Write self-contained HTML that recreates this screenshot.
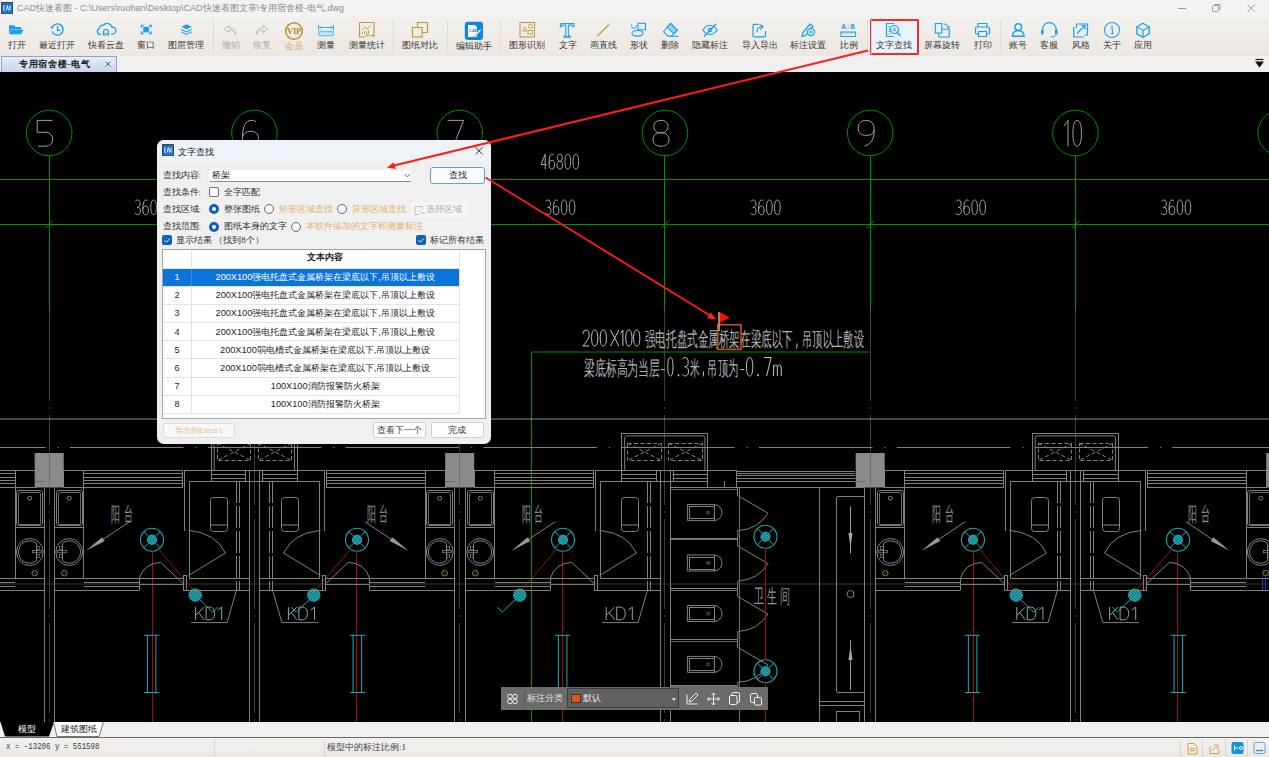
<!DOCTYPE html><html><head><meta charset="utf-8"><style>
*{margin:0;padding:0;box-sizing:border-box}
html,body{width:1269px;height:757px;overflow:hidden;background:#000;font-family:"Liberation Sans",sans-serif}
.a{position:absolute}
.ser{font-family:"Liberation Serif",serif}
.lbl{position:absolute;top:40px;font-family:"Liberation Serif",serif;font-size:9px;color:#3c3835;white-space:nowrap;line-height:11px;text-align:center;width:60px}
.dl{position:absolute;font-family:"Liberation Serif",serif;font-size:9px;color:#333;white-space:nowrap;line-height:11px}
.gold{color:#dfb46c}
.cell{position:absolute;font-size:9.2px;line-height:11px;color:#222;white-space:nowrap;text-align:center}
</style></head><body>
<div class="a" style="left:0;top:0;width:1269px;height:16px;background:#f3f3f3"></div>
<svg class="a" style="left:1px;top:2px" width="12" height="12"><defs><linearGradient id="ig1" x1="0" y1="0" x2="1" y2="1"><stop offset="0" stop-color="#0c62c4"/><stop offset="1" stop-color="#1a86ee"/></linearGradient></defs><rect x="0.5" y="0.5" width="11" height="11.2" fill="url(#ig1)" stroke="#3c3a38" stroke-width="0.9"/><path d="M3.8,3.8h-1v4.5h1M5.2,8.3l1.2,-4.8l1.2,4.8M9,3.6v4.7" fill="none" stroke="#e8f0fa" stroke-width="1"/></svg>
<div class="a" style="left:17px;top:2px;font-size:9px;line-height:12px;color:#8c8c8c;white-space:nowrap">CAD快速看图 - C:\Users\ruohan\Desktop\CAD快速看图文章\专用宿舍楼-电气.dwg</div>
<svg class="a" style="left:0;top:0" width="1269" height="16"><line x1="1178" y1="8.5" x2="1186" y2="8.5" stroke="#9a9a9a" stroke-width="1"/><rect x="1212.5" y="5.5" width="6" height="6" rx="1" fill="none" stroke="#9a9a9a"/><path d="M1214.5,4.5h5.5v5.5" fill="none" stroke="#9a9a9a"/><path d="M1247.5,4.5l7.5,7.5M1255,4.5l-7.5,7.5" stroke="#9a9a9a" stroke-width="1"/></svg>
<div class="a" style="left:0;top:16px;width:1269px;height:40px;background:linear-gradient(#f2f1ee,#ece7e2)"></div>
<div class="a" style="left:870px;top:19px;width:49px;height:36px;background:#e9f1fb;border:2px solid #e8302c;border-radius:1px"></div>
<div class="a" style="left:871px;top:20px;width:1px;height:34px;background:#c5d7ef"></div>
<div class="a" style="left:213px;top:20px;width:1px;height:33px;background:#dedad5"></div>
<div class="a" style="left:393px;top:20px;width:1px;height:33px;background:#dedad5"></div>
<div class="a" style="left:447px;top:20px;width:1px;height:33px;background:#dedad5"></div>
<div class="a" style="left:500px;top:20px;width:1px;height:33px;background:#dedad5"></div>
<div class="a" style="left:867px;top:20px;width:1px;height:33px;background:#dedad5"></div>
<div class="a" style="left:1000px;top:20px;width:1px;height:33px;background:#dedad5"></div>
<div class="lbl" style="left:-13.5px;top:40px;">打开</div>
<div class="lbl" style="left:26.5px;top:40px;">最近打开</div>
<div class="lbl" style="left:75.7px;top:40px;">快看云盘</div>
<div class="lbl" style="left:115.5px;top:40px;">窗口</div>
<div class="lbl" style="left:156px;top:40px;">图层管理</div>
<div class="lbl" style="left:200.5px;top:40px;color:#b4b0ac;">撤销</div>
<div class="lbl" style="left:231.5px;top:40px;color:#b4b0ac;">恢复</div>
<div class="lbl" style="left:264px;top:41px;color:#d6ad66;">会员</div>
<div class="lbl" style="left:296px;top:40px;">测量</div>
<div class="lbl" style="left:336.5px;top:40px;">测量统计</div>
<div class="lbl" style="left:389.5px;top:40px;">图纸对比</div>
<div class="lbl" style="left:443.5px;top:41px;">编辑助手</div>
<div class="lbl" style="left:497px;top:40px;">图形识别</div>
<div class="lbl" style="left:537.5px;top:40px;">文字</div>
<div class="lbl" style="left:573px;top:40px;">画直线</div>
<div class="lbl" style="left:609px;top:40px;">形状</div>
<div class="lbl" style="left:640px;top:40px;">删除</div>
<div class="lbl" style="left:680px;top:40px;">隐藏标注</div>
<div class="lbl" style="left:729.5px;top:40px;">导入导出</div>
<div class="lbl" style="left:778px;top:40px;">标注设置</div>
<div class="lbl" style="left:818.5px;top:40px;">比例</div>
<div class="lbl" style="left:863.5px;top:40px;">文字查找</div>
<div class="lbl" style="left:912px;top:40px;">屏幕旋转</div>
<div class="lbl" style="left:952.5px;top:40px;">打印</div>
<div class="lbl" style="left:988px;top:40px;">账号</div>
<div class="lbl" style="left:1019.3px;top:40px;">客服</div>
<div class="lbl" style="left:1050.5px;top:40px;">风格</div>
<div class="lbl" style="left:1081.5px;top:40px;">关于</div>
<div class="lbl" style="left:1112.8px;top:40px;">应用</div>
<svg class="a" style="left:0;top:0" width="1269" height="56">
<path d="M9,25.3h5.2l1.3,1.6H21v2.3H11.3L9,33.8Z" fill="#1aa0ef"/>
<path d="M11.4,29.6H23.6L21.2,34.2H9.2Z" fill="#1aa0ef"/>
<path d="M52.2,31.5A5.6,5.6 0 1 0 52.3,27.3" fill="none" stroke="#1aa0ef" stroke-width="1.4"/>
<path d="M50,27.6l2.6,-1.6l0.6,2.9z" fill="#1aa0ef"/>
<path d="M57.5,26.3V30.3H60.2" fill="none" stroke="#1aa0ef" stroke-width="1.4"/>
<path d="M101,34.3h-1.2a3,3 0 0 1 -0.5,-5.8a4,4 0 0 1 4.3,-3.3a4.8,4.8 0 0 1 8.3,1.8a3.6,3.6 0 0 1 0.6,7.2h-1.3" fill="none" stroke="#1aa0ef" stroke-width="1.3"/>
<path d="M103.5,35v-3a2.5,2.5 0 0 1 5,0v3z" fill="none" stroke="#1aa0ef" stroke-width="1.2"/>
<line x1="103.5" y1="33.5" x2="108.5" y2="33.5" stroke="#1aa0ef" stroke-width="0.8"/>
<rect x="143.3" y="26.8" width="5.6" height="5.6" fill="#1aa0ef"/>
<path d="M141.5,27.5v-2h2M149,25.5h2v2M151,31.5v2h-2M143.5,33.5h-2v-2" fill="none" stroke="#1aa0ef" stroke-width="1.5"/>
<path d="M186.5,24.3l5.2,2.4l-5.2,2.6l-5.2,-2.6z" fill="#1aa0ef"/>
<path d="M181.3,28.8l5.2,2.6l5.2,-2.6v1.2l-5.2,2.6l-5.2,-2.6z" fill="#1aa0ef"/>
<path d="M181.3,31.3l5.2,2.6l5.2,-2.6v1.2l-5.2,2.6l-5.2,-2.6z" fill="#1aa0ef"/>
<path d="M229,25.2l-4.6,3.6l4.6,3.6v-2.2c3.2,0 5.6,1.2 6.6,4.3c0.3,-4 -2.3,-6.6 -6.6,-6.8z" fill="none" stroke="#bdb9b5" stroke-width="1"/>
<path d="M263,25.2l4.6,3.6l-4.6,3.6v-2.2c-3.2,0 -5.6,1.2 -6.6,4.3c-0.3,-4 2.3,-6.6 6.6,-6.8z" fill="none" stroke="#bdb9b5" stroke-width="1"/>
<circle cx="294" cy="31" r="8.3" fill="none" stroke="#c08a2a" stroke-width="1.4"/>
<text x="294" y="34.3" font-family="Liberation Serif" font-weight="bold" font-size="8.6" fill="#b98a22" text-anchor="middle" letter-spacing="-0.3">VIP</text>
<path d="M318.5,25v5M333.5,25v5" stroke="#3aa8ee" stroke-width="1"/>
<line x1="319" y1="27.5" x2="333" y2="27.5" stroke="#3aa8ee" stroke-width="1"/>
<path d="M319,27.5l2.2,-1.6v3.2zM333,27.5l-2.2,-1.6v3.2z" fill="#3aa8ee"/>
<rect x="319" y="31.3" width="14" height="4.4" fill="#cfe9f8" stroke="#5ab8ee" stroke-width="1"/>
<path d="M321,31.8v2M323.5,31.8v1.5M326,31.8v2M328.5,31.8v1.5M331,31.8v2" stroke="#5ab8ee" stroke-width="0.6"/>
<path d="M359.5,22.5h14.5v14.5" fill="none" stroke="#c49a3e" stroke-width="1.1"/>
<path d="M359.5,22.5v14.5h6" fill="none" stroke="#c49a3e" stroke-width="1.1"/>
<path d="M362,30l3,-3l2,2l3.5,-3.5" fill="none" stroke="#c49a3e" stroke-width="0.9"/>
<path d="M362.5,34v-2M364.5,34v-3M366.5,34v-2.5M368.5,34v-4" stroke="#c49a3e" stroke-width="0.9"/>
<path d="M366.5,35.5h7M367,34v3M373,34v3" stroke="#c49a3e" stroke-width="0.8"/>
<rect x="412.5" y="27.5" width="9.5" height="9.5" fill="none" stroke="#c49a3e" stroke-width="1.2"/>
<path d="M417.5,27.5v-5h10v10h-5.5" fill="none" stroke="#c49a3e" stroke-width="1.2"/>
<rect x="464.8" y="21.8" width="18.2" height="18.2" rx="3" fill="#0e86de"/>
<path d="M468,25h7l2,2v10h-9z" fill="#fff"/>
<text x="469" y="31.5" font-family="Liberation Sans" font-weight="bold" font-size="4" fill="#0e86de">CAD</text>
<path d="M474,36l6,-7l1.3,1.1l-6,7l-1.8,0.6z" fill="#fff" stroke="#0e86de" stroke-width="0.5"/>
<rect x="520" y="22.5" width="14.5" height="14.5" fill="none" stroke="#c49a3e" stroke-width="1.1"/>
<path d="M522.5,31l2.2,-4l2.2,4z" fill="none" stroke="#c49a3e" stroke-width="0.9"/>
<circle cx="530.3" cy="26.3" r="2" fill="none" stroke="#c49a3e" stroke-width="0.9"/>
<rect x="528" y="30.5" width="4.5" height="3.5" fill="none" stroke="#c49a3e" stroke-width="0.9"/>
<path d="M561,23.5h13v3.2h-1.4l-0.6,-1.6h-3.6v11h1.8v1h-6.2v-1h1.8v-11h-3.6l-0.6,1.6h-1.4z" fill="none" stroke="#1aa0ef" stroke-width="1.1"/>
<line x1="597.5" y1="36" x2="609" y2="24.3" stroke="#c9a44f" stroke-width="1.5"/>
<rect x="638" y="23.3" width="7.5" height="6.5" fill="none" stroke="#1aa0ef" stroke-width="1.1"/>
<ellipse cx="637.5" cy="33.3" rx="5.5" ry="2.8" fill="none" stroke="#1aa0ef" stroke-width="1.1"/>
<path d="M631.5,24.5c0,3 1,4 2.5,4s1.5,-3 3,-3" fill="none" stroke="#1aa0ef" stroke-width="1"/>
<path d="M670.5,23.5l6.8,6.8l-5.8,5.8h-3.5l-4.5,-4.5z" fill="none" stroke="#1aa0ef" stroke-width="1.1"/>
<path d="M670.5,23.5l6.8,6.8l-3.5,3.5l-6.8,-6.8z" fill="#9ad2f6" stroke="#1aa0ef" stroke-width="1.1"/>
<line x1="671" y1="36.3" x2="678.5" y2="36.3" stroke="#1aa0ef" stroke-width="1"/>
<path d="M702.8,30c2,-3 4.3,-4.5 7.2,-4.5s5.2,1.5 7.2,4.5c-2,3 -4.3,4.5 -7.2,4.5s-5.2,-1.5 -7.2,-4.5z" fill="none" stroke="#1aa0ef" stroke-width="1.2"/>
<circle cx="710" cy="30" r="1.8" fill="none" stroke="#1aa0ef" stroke-width="1.1"/>
<line x1="704" y1="36.5" x2="716" y2="24" stroke="#1aa0ef" stroke-width="1.2"/>
<path d="M758.5,24.3h-4.5a1,1 0 0 0 -1,1v10.5a1,1 0 0 0 1,1h10.5a1,1 0 0 0 1,-1v-4.5" fill="none" stroke="#1aa0ef" stroke-width="1.2"/>
<path d="M757,32c0,-3.5 2,-5.5 5.5,-5.5M759.5,24.5l3.5,2l-2.5,3" fill="none" stroke="#1aa0ef" stroke-width="1.2"/>
<path d="M802,36.5l1,-4l7,-8.5l3,2.5l-7,8.5z" fill="none" stroke="#1aa0ef" stroke-width="1.3"/>
<circle cx="811" cy="32" r="3.6" fill="#f0ede9" stroke="#1aa0ef" stroke-width="1.2"/>
<circle cx="811" cy="32" r="1.3" fill="none" stroke="#1aa0ef" stroke-width="0.9"/>
<text x="848" y="29" font-family="Liberation Mono" font-weight="bold" font-size="7.5" fill="#1aa0ef" text-anchor="middle">A:B</text>
<rect x="840.8" y="32" width="14.8" height="4.5" fill="none" stroke="#1aa0ef" stroke-width="1"/>
<path d="M843,32v2M845,32v1.5M847,32v2M849,32v1.5M851,32v2M853,32v1.5" stroke="#1aa0ef" stroke-width="0.6"/>
<path d="M894,23.5h-7.5v13h7" fill="none" stroke="#1aa0ef" stroke-width="1.2"/>
<path d="M888.5,26.5h2M888.5,29h1.5M888.5,31.5h1.5M888.5,34h2" stroke="#1aa0ef" stroke-width="0.8"/>
<circle cx="894.5" cy="29.5" r="4" fill="none" stroke="#1aa0ef" stroke-width="1.2"/>
<path d="M893,31.5l1.5,-4l1.5,4M893.5,30.3h2" fill="none" stroke="#1aa0ef" stroke-width="0.7"/>
<line x1="897.3" y1="32.5" x2="900.3" y2="35.8" stroke="#1aa0ef" stroke-width="1.4"/>
<rect x="935.3" y="23.5" width="6.5" height="9.5" fill="none" stroke="#1aa0ef" stroke-width="1.1"/>
<path d="M941.8,29.3h7.5v7.7h-10.5v-4" fill="none" stroke="#1aa0ef" stroke-width="1.1"/>
<path d="M944,24c2.5,0 4.5,1.5 4.5,4M947,26.5l1.5,1.8l1.5,-1.8" fill="none" stroke="#1aa0ef" stroke-width="1"/>
<path d="M978,27v-3.5h9v3.5" fill="none" stroke="#1aa0ef" stroke-width="1.2"/>
<rect x="975.5" y="27" width="14" height="7" rx="1.5" fill="none" stroke="#1aa0ef" stroke-width="1.2"/>
<rect x="978.5" y="31.5" width="8" height="5" fill="#f0ede9" stroke="#1aa0ef" stroke-width="1.1"/>
<circle cx="1018.3" cy="27" r="3.3" fill="none" stroke="#1aa0ef" stroke-width="1.4"/>
<path d="M1012.5,36.3c0,-3.5 2.5,-5.5 5.8,-5.5s5.8,2 5.8,5.5z" fill="none" stroke="#1aa0ef" stroke-width="1.4"/>
<path d="M1042.5,32v-2.5a6.8,6.8 0 0 1 13.6,0v2.5" fill="none" stroke="#1aa0ef" stroke-width="1.2"/>
<rect x="1041" y="29.5" width="2.6" height="5" rx="1.2" fill="#1aa0ef"/>
<rect x="1055" y="29.5" width="2.6" height="5" rx="1.2" fill="#1aa0ef"/>
<path d="M1056,34.5c0,1.5 -1.5,2.3 -4,2.3h-1.5" fill="none" stroke="#1aa0ef" stroke-width="1"/>
<path d="M1076.5,24h11v11h-3M1076.5,24v4" fill="none" stroke="#1aa0ef" stroke-width="1.2"/>
<path d="M1073.8,27v10h10" fill="none" stroke="#1aa0ef" stroke-width="1.2"/>
<path d="M1077,33.5l8,-8M1081,25.5h4v4" fill="none" stroke="#1aa0ef" stroke-width="1.2"/>
<circle cx="1112" cy="30" r="7.5" fill="none" stroke="#1aa0ef" stroke-width="1.1"/>
<circle cx="1112" cy="26.3" r="0.9" fill="#1aa0ef"/>
<path d="M1110.8,28.5h1.6v5M1110.5,33.7h3.2" fill="none" stroke="#1aa0ef" stroke-width="1"/>
<path d="M1143,23.3l6.2,3.5v7l-6.2,3.5l-6.2,-3.5v-7z" fill="none" stroke="#1aa0ef" stroke-width="1.3"/>
<path d="M1136.8,26.8l6.2,3.6l6.2,-3.6M1143,30.4v6.8" fill="none" stroke="#1aa0ef" stroke-width="1.2"/>
</svg>
<div class="a" style="left:0;top:56px;width:1269px;height:16px;background:#f0f0f0"></div>
<div class="a" style="left:1px;top:56px;width:116px;height:16px;background:linear-gradient(#e6eef8,#c5d6ea);border:1px solid #8aa8cf;border-bottom:none"></div>
<div class="a ser" style="left:19px;top:58.5px;font-size:9px;line-height:11px;color:#1a1a1a;font-weight:bold;white-space:nowrap;letter-spacing:0.7px">专用宿舍楼-电气</div>
<svg class="a" style="left:0;top:56px" width="1269" height="16"><path d="M105.5,5.5l5,5M110.5,5.5l-5,5" stroke="#555" stroke-width="0.9"/><path d="M1255.5,3.5h8" stroke="#222" stroke-width="1.2"/><path d="M1255,5.5h9l-4.5,6z" fill="#111"/></svg>
<div class="a" style="left:0;top:72px;width:1269px;height:650px;background:#000"></div>
<svg class="a" style="left:0;top:0" width="1269" height="757" viewBox="0 0 1269 757"><defs><pattern id="hat" width="2.2" height="2.2" patternUnits="userSpaceOnUse" patternTransform="rotate(45)"><rect width="2.2" height="2.2" fill="#22b0b8"/><rect width="0.8" height="2.2" fill="#0c5a60"/></pattern><clipPath id="cp"><rect x="0" y="72" width="1269" height="650"/></clipPath></defs><g clip-path="url(#cp)"><line x1="49.5" y1="311" x2="49.5" y2="722" stroke="#3c3c3c" stroke-width="1" stroke-dasharray="90,6,2,6"/><line x1="254.5" y1="311" x2="254.5" y2="722" stroke="#3c3c3c" stroke-width="1" stroke-dasharray="90,6,2,6"/><line x1="459.5" y1="311" x2="459.5" y2="722" stroke="#3c3c3c" stroke-width="1" stroke-dasharray="90,6,2,6"/><line x1="664.5" y1="311" x2="664.5" y2="722" stroke="#3c3c3c" stroke-width="1" stroke-dasharray="90,6,2,6"/><line x1="870.5" y1="311" x2="870.5" y2="722" stroke="#3c3c3c" stroke-width="1" stroke-dasharray="90,6,2,6"/><line x1="1075.5" y1="311" x2="1075.5" y2="722" stroke="#3c3c3c" stroke-width="1" stroke-dasharray="90,6,2,6"/><line x1="1280.5" y1="311" x2="1280.5" y2="722" stroke="#3c3c3c" stroke-width="1" stroke-dasharray="90,6,2,6"/><line x1="0" y1="584" x2="1269" y2="584" stroke="#353535" stroke-width="1"/><circle cx="49.2" cy="133" r="22.8" fill="none" stroke="#009000" stroke-width="1"/><line x1="49.5" y1="155.8" x2="49.5" y2="311" stroke="#009000" stroke-width="1"/><path d="M45.2,228.5L53.2,220.5" stroke="#009000" stroke-width="1"/><circle cx="254.45" cy="133" r="22.8" fill="none" stroke="#009000" stroke-width="1"/><line x1="254.5" y1="155.8" x2="254.5" y2="311" stroke="#009000" stroke-width="1"/><path d="M250.45,228.5L258.45,220.5" stroke="#009000" stroke-width="1"/><circle cx="459.7" cy="133" r="22.8" fill="none" stroke="#009000" stroke-width="1"/><line x1="459.5" y1="155.8" x2="459.5" y2="311" stroke="#009000" stroke-width="1"/><path d="M455.7,228.5L463.7,220.5" stroke="#009000" stroke-width="1"/><circle cx="664.95" cy="133" r="22.8" fill="none" stroke="#009000" stroke-width="1"/><line x1="664.5" y1="155.8" x2="664.5" y2="311" stroke="#009000" stroke-width="1"/><path d="M660.95,228.5L668.95,220.5" stroke="#009000" stroke-width="1"/><circle cx="870.2" cy="133" r="22.8" fill="none" stroke="#009000" stroke-width="1"/><line x1="870.5" y1="155.8" x2="870.5" y2="311" stroke="#009000" stroke-width="1"/><path d="M866.2,228.5L874.2,220.5" stroke="#009000" stroke-width="1"/><circle cx="1075.45" cy="133" r="22.8" fill="none" stroke="#009000" stroke-width="1"/><line x1="1075.5" y1="155.8" x2="1075.5" y2="311" stroke="#009000" stroke-width="1"/><path d="M1071.45,228.5L1079.45,220.5" stroke="#009000" stroke-width="1"/><circle cx="1280.7" cy="133" r="22.8" fill="none" stroke="#009000" stroke-width="1"/><line x1="1280.5" y1="155.8" x2="1280.5" y2="311" stroke="#009000" stroke-width="1"/><path d="M1276.7,228.5L1284.7,220.5" stroke="#009000" stroke-width="1"/><line x1="0" y1="179.5" x2="1269" y2="179.5" stroke="#009000" stroke-width="1"/><line x1="0" y1="224.5" x2="1269" y2="224.5" stroke="#009000" stroke-width="1"/><path transform="translate(37.20,120.40) scale(1.600,2.580)" d="M9.5,0H0V4.6H5.5A4.2,2.7 0 0 1 5.5,10H0.5" fill="none" stroke="#a0a0a0" stroke-width="1.0" vector-effect="non-scaling-stroke"/><path transform="translate(242.45,120.40) scale(1.600,2.580)" d="M8.5,0.5C7.5,0.1 6.5,0 5.5,0C1.5,0 0,3 0,6.5C0,9 2,10 5,10C8,10 10,9 10,7C10,5 8,4.2 5,4.2C2.5,4.2 0.8,5 0,6.5" fill="none" stroke="#a0a0a0" stroke-width="1.0" vector-effect="non-scaling-stroke"/><path transform="translate(447.70,120.40) scale(1.600,2.580)" d="M0,0H10L3.5,10" fill="none" stroke="#a0a0a0" stroke-width="1.0" vector-effect="non-scaling-stroke"/><path transform="translate(652.95,120.40) scale(1.600,2.580)" d="M5,4.8C2,4.8 0.6,3.8 0.6,2.4C0.6,1 2,0 5,0C8,0 9.4,1 9.4,2.4C9.4,3.8 8,4.8 5,4.8C1.6,4.8 0,5.9 0,7.4C0,9 1.8,10 5,10C8.2,10 10,9 10,7.4C10,5.9 8.4,4.8 5,4.8Z" fill="none" stroke="#a0a0a0" stroke-width="1.0" vector-effect="non-scaling-stroke"/><path transform="translate(858.20,120.40) scale(1.600,2.580)" d="M10,3.5C10,5.2 8,5.8 5,5.8C2,5.8 0,5 0,3C0,1 2,0 5,0C8.5,0 10,1.5 10,4C10,7 8.5,9 4,10" fill="none" stroke="#a0a0a0" stroke-width="1.0" vector-effect="non-scaling-stroke"/><path transform="translate(1062.95,120.40) scale(0.850,2.580)" d="M1.5,2.2L6,0V10" fill="none" stroke="#a0a0a0" stroke-width="1.0" vector-effect="non-scaling-stroke"/><path transform="translate(1072.95,120.40) scale(0.850,2.580)" d="M5,0C1.2,0 0,2.5 0,5C0,7.5 1.2,10 5,10C8.8,10 10,7.5 10,5C10,2.5 8.8,0 5,0Z" fill="none" stroke="#a0a0a0" stroke-width="1.0" vector-effect="non-scaling-stroke"/><path transform="translate(1268.20,120.40) scale(0.850,2.580)" d="M1.5,2.2L6,0V10" fill="none" stroke="#a0a0a0" stroke-width="1.0" vector-effect="non-scaling-stroke"/><path transform="translate(1278.20,120.40) scale(0.850,2.580)" d="M1.5,2.2L6,0V10" fill="none" stroke="#a0a0a0" stroke-width="1.0" vector-effect="non-scaling-stroke"/><path transform="translate(134.82,200.00) scale(0.560,1.470)" d="M0.5,1C2,0.2 3.5,0 5,0C8,0 9.5,1.2 9.5,2.6C9.5,4.1 8,5 4,5C8.2,5 10,5.9 10,7.4C10,9.1 8,10 5,10C3.2,10 1.5,9.6 0,9" fill="none" stroke="#a8a8a8" stroke-width="1.0" vector-effect="non-scaling-stroke"/><path transform="translate(142.82,200.00) scale(0.560,1.470)" d="M8.5,0.5C7.5,0.1 6.5,0 5.5,0C1.5,0 0,3 0,6.5C0,9 2,10 5,10C8,10 10,9 10,7C10,5 8,4.2 5,4.2C2.5,4.2 0.8,5 0,6.5" fill="none" stroke="#a8a8a8" stroke-width="1.0" vector-effect="non-scaling-stroke"/><path transform="translate(150.82,200.00) scale(0.560,1.470)" d="M5,0C1.2,0 0,2.5 0,5C0,7.5 1.2,10 5,10C8.8,10 10,7.5 10,5C10,2.5 8.8,0 5,0Z" fill="none" stroke="#a8a8a8" stroke-width="1.0" vector-effect="non-scaling-stroke"/><path transform="translate(158.82,200.00) scale(0.560,1.470)" d="M5,0C1.2,0 0,2.5 0,5C0,7.5 1.2,10 5,10C8.8,10 10,7.5 10,5C10,2.5 8.8,0 5,0Z" fill="none" stroke="#a8a8a8" stroke-width="1.0" vector-effect="non-scaling-stroke"/><path transform="translate(340.07,200.00) scale(0.560,1.470)" d="M0.5,1C2,0.2 3.5,0 5,0C8,0 9.5,1.2 9.5,2.6C9.5,4.1 8,5 4,5C8.2,5 10,5.9 10,7.4C10,9.1 8,10 5,10C3.2,10 1.5,9.6 0,9" fill="none" stroke="#a8a8a8" stroke-width="1.0" vector-effect="non-scaling-stroke"/><path transform="translate(348.07,200.00) scale(0.560,1.470)" d="M8.5,0.5C7.5,0.1 6.5,0 5.5,0C1.5,0 0,3 0,6.5C0,9 2,10 5,10C8,10 10,9 10,7C10,5 8,4.2 5,4.2C2.5,4.2 0.8,5 0,6.5" fill="none" stroke="#a8a8a8" stroke-width="1.0" vector-effect="non-scaling-stroke"/><path transform="translate(356.07,200.00) scale(0.560,1.470)" d="M5,0C1.2,0 0,2.5 0,5C0,7.5 1.2,10 5,10C8.8,10 10,7.5 10,5C10,2.5 8.8,0 5,0Z" fill="none" stroke="#a8a8a8" stroke-width="1.0" vector-effect="non-scaling-stroke"/><path transform="translate(364.07,200.00) scale(0.560,1.470)" d="M5,0C1.2,0 0,2.5 0,5C0,7.5 1.2,10 5,10C8.8,10 10,7.5 10,5C10,2.5 8.8,0 5,0Z" fill="none" stroke="#a8a8a8" stroke-width="1.0" vector-effect="non-scaling-stroke"/><path transform="translate(545.33,200.00) scale(0.560,1.470)" d="M0.5,1C2,0.2 3.5,0 5,0C8,0 9.5,1.2 9.5,2.6C9.5,4.1 8,5 4,5C8.2,5 10,5.9 10,7.4C10,9.1 8,10 5,10C3.2,10 1.5,9.6 0,9" fill="none" stroke="#a8a8a8" stroke-width="1.0" vector-effect="non-scaling-stroke"/><path transform="translate(553.33,200.00) scale(0.560,1.470)" d="M8.5,0.5C7.5,0.1 6.5,0 5.5,0C1.5,0 0,3 0,6.5C0,9 2,10 5,10C8,10 10,9 10,7C10,5 8,4.2 5,4.2C2.5,4.2 0.8,5 0,6.5" fill="none" stroke="#a8a8a8" stroke-width="1.0" vector-effect="non-scaling-stroke"/><path transform="translate(561.33,200.00) scale(0.560,1.470)" d="M5,0C1.2,0 0,2.5 0,5C0,7.5 1.2,10 5,10C8.8,10 10,7.5 10,5C10,2.5 8.8,0 5,0Z" fill="none" stroke="#a8a8a8" stroke-width="1.0" vector-effect="non-scaling-stroke"/><path transform="translate(569.33,200.00) scale(0.560,1.470)" d="M5,0C1.2,0 0,2.5 0,5C0,7.5 1.2,10 5,10C8.8,10 10,7.5 10,5C10,2.5 8.8,0 5,0Z" fill="none" stroke="#a8a8a8" stroke-width="1.0" vector-effect="non-scaling-stroke"/><path transform="translate(750.58,200.00) scale(0.560,1.470)" d="M0.5,1C2,0.2 3.5,0 5,0C8,0 9.5,1.2 9.5,2.6C9.5,4.1 8,5 4,5C8.2,5 10,5.9 10,7.4C10,9.1 8,10 5,10C3.2,10 1.5,9.6 0,9" fill="none" stroke="#a8a8a8" stroke-width="1.0" vector-effect="non-scaling-stroke"/><path transform="translate(758.58,200.00) scale(0.560,1.470)" d="M8.5,0.5C7.5,0.1 6.5,0 5.5,0C1.5,0 0,3 0,6.5C0,9 2,10 5,10C8,10 10,9 10,7C10,5 8,4.2 5,4.2C2.5,4.2 0.8,5 0,6.5" fill="none" stroke="#a8a8a8" stroke-width="1.0" vector-effect="non-scaling-stroke"/><path transform="translate(766.58,200.00) scale(0.560,1.470)" d="M5,0C1.2,0 0,2.5 0,5C0,7.5 1.2,10 5,10C8.8,10 10,7.5 10,5C10,2.5 8.8,0 5,0Z" fill="none" stroke="#a8a8a8" stroke-width="1.0" vector-effect="non-scaling-stroke"/><path transform="translate(774.58,200.00) scale(0.560,1.470)" d="M5,0C1.2,0 0,2.5 0,5C0,7.5 1.2,10 5,10C8.8,10 10,7.5 10,5C10,2.5 8.8,0 5,0Z" fill="none" stroke="#a8a8a8" stroke-width="1.0" vector-effect="non-scaling-stroke"/><path transform="translate(955.83,200.00) scale(0.560,1.470)" d="M0.5,1C2,0.2 3.5,0 5,0C8,0 9.5,1.2 9.5,2.6C9.5,4.1 8,5 4,5C8.2,5 10,5.9 10,7.4C10,9.1 8,10 5,10C3.2,10 1.5,9.6 0,9" fill="none" stroke="#a8a8a8" stroke-width="1.0" vector-effect="non-scaling-stroke"/><path transform="translate(963.83,200.00) scale(0.560,1.470)" d="M8.5,0.5C7.5,0.1 6.5,0 5.5,0C1.5,0 0,3 0,6.5C0,9 2,10 5,10C8,10 10,9 10,7C10,5 8,4.2 5,4.2C2.5,4.2 0.8,5 0,6.5" fill="none" stroke="#a8a8a8" stroke-width="1.0" vector-effect="non-scaling-stroke"/><path transform="translate(971.83,200.00) scale(0.560,1.470)" d="M5,0C1.2,0 0,2.5 0,5C0,7.5 1.2,10 5,10C8.8,10 10,7.5 10,5C10,2.5 8.8,0 5,0Z" fill="none" stroke="#a8a8a8" stroke-width="1.0" vector-effect="non-scaling-stroke"/><path transform="translate(979.83,200.00) scale(0.560,1.470)" d="M5,0C1.2,0 0,2.5 0,5C0,7.5 1.2,10 5,10C8.8,10 10,7.5 10,5C10,2.5 8.8,0 5,0Z" fill="none" stroke="#a8a8a8" stroke-width="1.0" vector-effect="non-scaling-stroke"/><path transform="translate(1161.08,200.00) scale(0.560,1.470)" d="M0.5,1C2,0.2 3.5,0 5,0C8,0 9.5,1.2 9.5,2.6C9.5,4.1 8,5 4,5C8.2,5 10,5.9 10,7.4C10,9.1 8,10 5,10C3.2,10 1.5,9.6 0,9" fill="none" stroke="#a8a8a8" stroke-width="1.0" vector-effect="non-scaling-stroke"/><path transform="translate(1169.08,200.00) scale(0.560,1.470)" d="M8.5,0.5C7.5,0.1 6.5,0 5.5,0C1.5,0 0,3 0,6.5C0,9 2,10 5,10C8,10 10,9 10,7C10,5 8,4.2 5,4.2C2.5,4.2 0.8,5 0,6.5" fill="none" stroke="#a8a8a8" stroke-width="1.0" vector-effect="non-scaling-stroke"/><path transform="translate(1177.08,200.00) scale(0.560,1.470)" d="M5,0C1.2,0 0,2.5 0,5C0,7.5 1.2,10 5,10C8.8,10 10,7.5 10,5C10,2.5 8.8,0 5,0Z" fill="none" stroke="#a8a8a8" stroke-width="1.0" vector-effect="non-scaling-stroke"/><path transform="translate(1185.08,200.00) scale(0.560,1.470)" d="M5,0C1.2,0 0,2.5 0,5C0,7.5 1.2,10 5,10C8.8,10 10,7.5 10,5C10,2.5 8.8,0 5,0Z" fill="none" stroke="#a8a8a8" stroke-width="1.0" vector-effect="non-scaling-stroke"/><path transform="translate(541.00,154.20) scale(0.560,1.480)" d="M7.5,10V0L0,7H10" fill="none" stroke="#a8a8a8" stroke-width="1.0" vector-effect="non-scaling-stroke"/><path transform="translate(549.00,154.20) scale(0.560,1.480)" d="M8.5,0.5C7.5,0.1 6.5,0 5.5,0C1.5,0 0,3 0,6.5C0,9 2,10 5,10C8,10 10,9 10,7C10,5 8,4.2 5,4.2C2.5,4.2 0.8,5 0,6.5" fill="none" stroke="#a8a8a8" stroke-width="1.0" vector-effect="non-scaling-stroke"/><path transform="translate(557.00,154.20) scale(0.560,1.480)" d="M5,4.8C2,4.8 0.6,3.8 0.6,2.4C0.6,1 2,0 5,0C8,0 9.4,1 9.4,2.4C9.4,3.8 8,4.8 5,4.8C1.6,4.8 0,5.9 0,7.4C0,9 1.8,10 5,10C8.2,10 10,9 10,7.4C10,5.9 8.4,4.8 5,4.8Z" fill="none" stroke="#a8a8a8" stroke-width="1.0" vector-effect="non-scaling-stroke"/><path transform="translate(565.00,154.20) scale(0.560,1.480)" d="M5,0C1.2,0 0,2.5 0,5C0,7.5 1.2,10 5,10C8.8,10 10,7.5 10,5C10,2.5 8.8,0 5,0Z" fill="none" stroke="#a8a8a8" stroke-width="1.0" vector-effect="non-scaling-stroke"/><path transform="translate(573.00,154.20) scale(0.560,1.480)" d="M5,0C1.2,0 0,2.5 0,5C0,7.5 1.2,10 5,10C8.8,10 10,7.5 10,5C10,2.5 8.8,0 5,0Z" fill="none" stroke="#a8a8a8" stroke-width="1.0" vector-effect="non-scaling-stroke"/><path d="M1262.5,579V590M1265.5,579V590" stroke="#2238c8" stroke-width="1"/><path d="M531.5,722V352H869.5" fill="none" stroke="#009000" stroke-width="1"/><line x1="0" y1="447.5" x2="1269" y2="447.5" stroke="#808080" stroke-width="1" stroke-dasharray="113.5,12,1.2,11.1" stroke-dashoffset="67.8"/><line x1="0" y1="419" x2="1269" y2="419" stroke="#8c8c8c" stroke-width="1"/><path transform="translate(195.60,607.10) scale(0.850,1.270)" d="M0,0V10M10,0L0,6.5M3.5,4.3L10,10" fill="none" stroke="#a0a0a0" stroke-width="1.0" vector-effect="non-scaling-stroke"/><path transform="translate(206.10,607.10) scale(0.850,1.270)" d="M0,0V10H4C8,10 10,8 10,5C10,2 8,0 4,0Z" fill="none" stroke="#a0a0a0" stroke-width="1.0" vector-effect="non-scaling-stroke"/><path transform="translate(216.60,607.10) scale(0.850,1.270)" d="M1.5,2.2L6,0V10" fill="none" stroke="#a0a0a0" stroke-width="1.0" vector-effect="non-scaling-stroke"/><text x="111.0" y="521" font-size="20" fill="#8e8e8e" textLength="9.0" lengthAdjust="spacingAndGlyphs" style="font-family:'Liberation Sans';font-weight:200">阳</text><text x="123.8" y="521" font-size="20" fill="#8e8e8e" textLength="9.0" lengthAdjust="spacingAndGlyphs" style="font-family:'Liberation Sans';font-weight:200">台</text><path transform="translate(606.20,607.10) scale(0.850,1.270)" d="M0,0V10M10,0L0,6.5M3.5,4.3L10,10" fill="none" stroke="#a0a0a0" stroke-width="1.0" vector-effect="non-scaling-stroke"/><path transform="translate(616.70,607.10) scale(0.850,1.270)" d="M0,0V10H4C8,10 10,8 10,5C10,2 8,0 4,0Z" fill="none" stroke="#a0a0a0" stroke-width="1.0" vector-effect="non-scaling-stroke"/><path transform="translate(627.20,607.10) scale(0.850,1.270)" d="M1.5,2.2L6,0V10" fill="none" stroke="#a0a0a0" stroke-width="1.0" vector-effect="non-scaling-stroke"/><text x="521.6" y="521" font-size="20" fill="#8e8e8e" textLength="9.0" lengthAdjust="spacingAndGlyphs" style="font-family:'Liberation Sans';font-weight:200">阳</text><text x="534.4" y="521" font-size="20" fill="#8e8e8e" textLength="9.0" lengthAdjust="spacingAndGlyphs" style="font-family:'Liberation Sans';font-weight:200">台</text><path transform="translate(1016.80,607.10) scale(0.850,1.270)" d="M0,0V10M10,0L0,6.5M3.5,4.3L10,10" fill="none" stroke="#a0a0a0" stroke-width="1.0" vector-effect="non-scaling-stroke"/><path transform="translate(1027.30,607.10) scale(0.850,1.270)" d="M0,0V10H4C8,10 10,8 10,5C10,2 8,0 4,0Z" fill="none" stroke="#a0a0a0" stroke-width="1.0" vector-effect="non-scaling-stroke"/><path transform="translate(1037.80,607.10) scale(0.850,1.270)" d="M1.5,2.2L6,0V10" fill="none" stroke="#a0a0a0" stroke-width="1.0" vector-effect="non-scaling-stroke"/><text x="932.2" y="521" font-size="20" fill="#8e8e8e" textLength="9.0" lengthAdjust="spacingAndGlyphs" style="font-family:'Liberation Sans';font-weight:200">阳</text><text x="945.0" y="521" font-size="20" fill="#8e8e8e" textLength="9.0" lengthAdjust="spacingAndGlyphs" style="font-family:'Liberation Sans';font-weight:200">台</text><path transform="translate(288.40,607.10) scale(0.850,1.270)" d="M0,0V10M10,0L0,6.5M3.5,4.3L10,10" fill="none" stroke="#a0a0a0" stroke-width="1.0" vector-effect="non-scaling-stroke"/><path transform="translate(298.90,607.10) scale(0.850,1.270)" d="M0,0V10H4C8,10 10,8 10,5C10,2 8,0 4,0Z" fill="none" stroke="#a0a0a0" stroke-width="1.0" vector-effect="non-scaling-stroke"/><path transform="translate(309.40,607.10) scale(0.850,1.270)" d="M1.5,2.2L6,0V10" fill="none" stroke="#a0a0a0" stroke-width="1.0" vector-effect="non-scaling-stroke"/><text x="366.6" y="521" font-size="20" fill="#8e8e8e" textLength="9.0" lengthAdjust="spacingAndGlyphs" style="font-family:'Liberation Sans';font-weight:200">阳</text><text x="379.4" y="521" font-size="20" fill="#8e8e8e" textLength="9.0" lengthAdjust="spacingAndGlyphs" style="font-family:'Liberation Sans';font-weight:200">台</text><path transform="translate(1109.60,607.10) scale(0.850,1.270)" d="M0,0V10M10,0L0,6.5M3.5,4.3L10,10" fill="none" stroke="#a0a0a0" stroke-width="1.0" vector-effect="non-scaling-stroke"/><path transform="translate(1120.10,607.10) scale(0.850,1.270)" d="M0,0V10H4C8,10 10,8 10,5C10,2 8,0 4,0Z" fill="none" stroke="#a0a0a0" stroke-width="1.0" vector-effect="non-scaling-stroke"/><path transform="translate(1130.60,607.10) scale(0.850,1.270)" d="M1.5,2.2L6,0V10" fill="none" stroke="#a0a0a0" stroke-width="1.0" vector-effect="non-scaling-stroke"/><text x="1187.8" y="521" font-size="20" fill="#8e8e8e" textLength="9.0" lengthAdjust="spacingAndGlyphs" style="font-family:'Liberation Sans';font-weight:200">阳</text><text x="1200.6" y="521" font-size="20" fill="#8e8e8e" textLength="9.0" lengthAdjust="spacingAndGlyphs" style="font-family:'Liberation Sans';font-weight:200">台</text><g id="elecA"><circle cx="152" cy="539.7" r="11.5" fill="none" stroke="#1eaab4" stroke-width="1.1"/><circle cx="152" cy="539.7" r="4.6" fill="url(#hat)" stroke="#1eaab4"/><path d="M143.9,531.6L148.7,536.4M155.3,543L160.1,547.8M160.1,531.6L155.3,536.4M148.7,543L143.9,547.8" stroke="#1eaab4"/><line x1="152.5" y1="551.2" x2="152.5" y2="722" stroke="#980f14" stroke-width="1" /><line x1="158.3" y1="549.1" x2="193.2" y2="590" stroke="#980f14" stroke-width="1" /><circle cx="195.2" cy="595.1" r="6.2" fill="url(#hat)" stroke="#1eaab4"/><path d="M199.5,599.4L212.7,612.2L217.7,607.1" fill="none" stroke="#1eaab4"/></g><use href="#elecA" transform="matrix(-1,0,0,1,509,0)"/><use href="#elecA" transform="matrix(-1,0,0,1,715,0)"/><use href="#elecA" transform="translate(821,0)"/><use href="#elecA" transform="matrix(-1,0,0,1,1330,0)"/><line x1="129.7" y1="521.7" x2="103.4" y2="539.2" stroke="#8e8e8e" stroke-width="0.9"/><path d="M85.9,550.8L104.7,541.1L102.1,537.3Z" fill="#9a9a9a"/><line x1="555.2" y1="521.7" x2="529.0" y2="539.2" stroke="#8e8e8e" stroke-width="0.9"/><path d="M511.5,550.8L530.3,541.1L527.7,537.2Z" fill="#9a9a9a"/><line x1="965.2" y1="521.7" x2="939.0" y2="539.2" stroke="#8e8e8e" stroke-width="0.9"/><path d="M921.5,550.8L940.3,541.1L937.7,537.2Z" fill="#9a9a9a"/><line x1="364.8" y1="521.7" x2="391.0" y2="539.2" stroke="#8e8e8e" stroke-width="0.9"/><path d="M408.5,550.8L392.3,537.2L389.7,541.1Z" fill="#9a9a9a"/><line x1="1185.8" y1="521.7" x2="1212.0" y2="539.2" stroke="#8e8e8e" stroke-width="0.9"/><path d="M1229.5,550.8L1213.3,537.2L1210.7,541.1Z" fill="#9a9a9a"/><g id="modA"><rect x="63.5" y="470.5" width="20.0" height="17.0" fill="none" stroke="#808080" /><line x1="83.7" y1="470.5" x2="182.7" y2="470.5" stroke="#808080" stroke-width="1" /><line x1="83.7" y1="473.5" x2="182.7" y2="473.5" stroke="#808080" stroke-width="1" /><line x1="83.7" y1="477.5" x2="182.7" y2="477.5" stroke="#808080" stroke-width="1" /><line x1="83.7" y1="480.5" x2="182.7" y2="480.5" stroke="#808080" stroke-width="1" /><line x1="83.7" y1="483.5" x2="182.7" y2="483.5" stroke="#808080" stroke-width="1" /><line x1="83.7" y1="487.5" x2="182.7" y2="487.5" stroke="#808080" stroke-width="1" /><line x1="182.5" y1="470" x2="182.5" y2="488" stroke="#808080" stroke-width="1" /><rect x="56.5" y="490.5" width="26.0" height="35.0" fill="none" stroke="#808080" rx="2.5"/><rect x="58.5" y="492.5" width="22.0" height="32.0" fill="none" stroke="#6a6a6a" rx="1.5"/><circle cx="69.3" cy="498.2" r="2" fill="none" stroke="#808080"/><rect x="54.5" y="527.5" width="29.0" height="51.0" fill="none" stroke="#808080" /><circle cx="69.2" cy="552" r="13.4" fill="none" stroke="#808080"/><path d="M62.5,543.2A11.2,11.2 0 1 1 62.5,560.8Z" fill="none" stroke="#808080"/><rect x="57.5" y="550.5" width="9" height="2.2" fill="none" stroke="#808080" stroke-width="0.8"/><rect x="59.6" y="546.5" width="2.6" height="3" fill="none" stroke="#808080" stroke-width="0.7"/><rect x="59.6" y="554.5" width="2.6" height="3" fill="none" stroke="#808080" stroke-width="0.7"/><circle cx="64.3" cy="573.2" r="2.8" fill="none" stroke="#6e8a40"/><path d="M62.5,575L66,571.4" stroke="#606060" stroke-width="0.8"/><line x1="54.5" y1="487.6" x2="54.5" y2="722" stroke="#808080" stroke-width="1" /><line x1="83.5" y1="470" x2="83.5" y2="578.6" stroke="#808080" stroke-width="1" /><line x1="83.7" y1="578.5" x2="139.3" y2="578.5" stroke="#808080" stroke-width="1" /><line x1="83.7" y1="582.5" x2="139.3" y2="582.5" stroke="#808080" stroke-width="1" /><line x1="83.7" y1="586.5" x2="139.3" y2="586.5" stroke="#808080" stroke-width="1" /><line x1="83.7" y1="590.5" x2="139.3" y2="590.5" stroke="#808080" stroke-width="1" /><line x1="139.5" y1="578.5" x2="139.5" y2="590.1" stroke="#808080" stroke-width="1" /><line x1="54.5" y1="590.5" x2="83.7" y2="590.5" stroke="#808080" stroke-width="1" /><path d="M139.3,578.5Q144,563 160.7,562.4L183.7,584" fill="none" stroke="#808080"/><line x1="139.3" y1="578.5" x2="183.7" y2="578.5" stroke="#808080" stroke-width="1" /><line x1="139.3" y1="584.5" x2="183.7" y2="584.5" stroke="#7a7a7a" stroke-width="1" /><rect x="183.5" y="575.5" width="3.0" height="15.0" fill="none" stroke="#808080" /><line x1="186.5" y1="590.5" x2="249.2" y2="590.5" stroke="#808080" stroke-width="1" /><line x1="184" y1="470.5" x2="249.2" y2="470.5" stroke="#808080" stroke-width="1" /><line x1="184.5" y1="470.6" x2="184.5" y2="531" stroke="#808080" stroke-width="1" /><path d="M189.5,578.5V481.5H249.5" fill="none" stroke="#808080"/><line x1="189.5" y1="578.5" x2="249.2" y2="578.5" stroke="#808080" stroke-width="1" /><rect x="210.5" y="497.5" width="17.0" height="34.0" fill="none" stroke="#808080" rx="3"/><path d="M210.3,525H227" stroke="#8a8a8a"/><line x1="236.5" y1="481" x2="236.5" y2="590" stroke="#808080" stroke-width="1" stroke-dasharray="22,3"/><line x1="239.5" y1="481" x2="239.5" y2="590" stroke="#808080" stroke-width="1" stroke-dasharray="22,3"/><path d="M188.5,530.3Q216,533 225.4,553L188.5,575.5" fill="none" stroke="#808080"/><line x1="249.5" y1="470" x2="249.5" y2="722" stroke="#808080" stroke-width="1" /><path d="M191,622.6H227.1L236.8,589" fill="none" stroke="#808080"/><path d="M147.4,635.3V692.5M155.9,635.3V692.5M144,635.3H158.9M144,692.5H158.9" stroke="#1eaab4" stroke-width="1"/></g><use href="#modA" transform="matrix(-1,0,0,1,509,0)"/><use href="#modA" transform="translate(411,0)"/><use href="#modA" transform="translate(821,0)"/><use href="#modA" transform="matrix(-1,0,0,1,1330,0)"/><use href="#modA" transform="matrix(-1,0,0,1,99,0)"/><rect x="34.7" y="453" width="29" height="34.5" fill="#8a8a8a"/><line x1="34.7" y1="481.5" x2="44.2" y2="481.5" stroke="#6a6a6a" stroke-width="1" /><line x1="49.5" y1="453" x2="49.5" y2="487.5" stroke="#6e6e6e" stroke-width="1" /><rect x="445.2" y="453" width="29" height="34.5" fill="#8a8a8a"/><line x1="445.2" y1="481.5" x2="454.7" y2="481.5" stroke="#6a6a6a" stroke-width="1" /><line x1="459.5" y1="453" x2="459.5" y2="487.5" stroke="#6e6e6e" stroke-width="1" /><rect x="855.7" y="453" width="29" height="34.5" fill="#8a8a8a"/><line x1="855.7" y1="481.5" x2="865.2" y2="481.5" stroke="#6a6a6a" stroke-width="1" /><line x1="870.5" y1="453" x2="870.5" y2="487.5" stroke="#6e6e6e" stroke-width="1" /><rect x="1266.2" y="453" width="29" height="34.5" fill="#8a8a8a"/><line x1="1266.2" y1="481.5" x2="1275.7" y2="481.5" stroke="#6a6a6a" stroke-width="1" /><line x1="1280.5" y1="453" x2="1280.5" y2="487.5" stroke="#6e6e6e" stroke-width="1" /><rect x="211.5" y="433.5" width="86.0" height="48.0" fill="none" stroke="#808080" /><path d="M214.14999999999998,470.6V437.5Q214.14999999999998,435.9 215.95,435.9H292.45Q294.45,435.9 294.45,437.5V470.6" fill="none" stroke="#808080"/><rect x="217.5" y="443.5" width="33.0" height="17.0" fill="none" stroke="#808080" stroke-dasharray="4,2.5"/><path d="M217.14999999999998,443.3L250.95,460.5M250.95,443.3L217.14999999999998,460.5" fill="none" stroke="#808080" stroke-dasharray="4,2.5"/><rect x="258.5" y="443.5" width="33.0" height="17.0" fill="none" stroke="#808080" stroke-dasharray="4,2.5"/><path d="M258.05,443.3L291.85,460.5M291.85,443.3L258.05,460.5" fill="none" stroke="#808080" stroke-dasharray="4,2.5"/><line x1="211.14999999999998" y1="474.5" x2="245.85" y2="474.5" stroke="#808080" stroke-width="1" /><line x1="262.05" y1="474.5" x2="297.45" y2="474.5" stroke="#808080" stroke-width="1" /><line x1="211.14999999999998" y1="478.5" x2="245.85" y2="478.5" stroke="#808080" stroke-width="1" /><line x1="262.05" y1="478.5" x2="297.45" y2="478.5" stroke="#808080" stroke-width="1" /><line x1="211.14999999999998" y1="481.5" x2="245.85" y2="481.5" stroke="#808080" stroke-width="1" /><line x1="262.05" y1="481.5" x2="297.45" y2="481.5" stroke="#808080" stroke-width="1" /><line x1="245.5" y1="470.6" x2="245.5" y2="482" stroke="#808080" stroke-width="1" /><line x1="262.5" y1="470.6" x2="262.5" y2="482" stroke="#808080" stroke-width="1" /><line x1="211.14999999999998" y1="470.5" x2="297.45" y2="470.5" stroke="#808080" stroke-width="1" /><rect x="621.5" y="433.5" width="86.0" height="48.0" fill="none" stroke="#808080" /><path d="M624.6500000000001,470.6V437.5Q624.6500000000001,435.9 626.45,435.9H702.95Q704.95,435.9 704.95,437.5V470.6" fill="none" stroke="#808080"/><rect x="627.5" y="443.5" width="34.0" height="17.0" fill="none" stroke="#808080" stroke-dasharray="4,2.5"/><path d="M627.6500000000001,443.3L661.45,460.5M661.45,443.3L627.6500000000001,460.5" fill="none" stroke="#808080" stroke-dasharray="4,2.5"/><rect x="668.5" y="443.5" width="34.0" height="17.0" fill="none" stroke="#808080" stroke-dasharray="4,2.5"/><path d="M668.5500000000001,443.3L702.35,460.5M702.35,443.3L668.5500000000001,460.5" fill="none" stroke="#808080" stroke-dasharray="4,2.5"/><line x1="621.6500000000001" y1="474.5" x2="656.35" y2="474.5" stroke="#808080" stroke-width="1" /><line x1="672.5500000000001" y1="474.5" x2="707.95" y2="474.5" stroke="#808080" stroke-width="1" /><line x1="621.6500000000001" y1="478.5" x2="656.35" y2="478.5" stroke="#808080" stroke-width="1" /><line x1="672.5500000000001" y1="478.5" x2="707.95" y2="478.5" stroke="#808080" stroke-width="1" /><line x1="621.6500000000001" y1="481.5" x2="656.35" y2="481.5" stroke="#808080" stroke-width="1" /><line x1="672.5500000000001" y1="481.5" x2="707.95" y2="481.5" stroke="#808080" stroke-width="1" /><line x1="656.5" y1="470.6" x2="656.5" y2="482" stroke="#808080" stroke-width="1" /><line x1="673.5" y1="470.6" x2="673.5" y2="482" stroke="#808080" stroke-width="1" /><line x1="621.6500000000001" y1="470.5" x2="707.95" y2="470.5" stroke="#808080" stroke-width="1" /><rect x="1032.5" y="433.5" width="86.0" height="48.0" fill="none" stroke="#808080" /><path d="M1035.15,470.6V437.5Q1035.15,435.9 1036.95,435.9H1113.45Q1115.45,435.9 1115.45,437.5V470.6" fill="none" stroke="#808080"/><rect x="1038.5" y="443.5" width="33.0" height="17.0" fill="none" stroke="#808080" stroke-dasharray="4,2.5"/><path d="M1038.15,443.3L1071.95,460.5M1071.95,443.3L1038.15,460.5" fill="none" stroke="#808080" stroke-dasharray="4,2.5"/><rect x="1079.5" y="443.5" width="33.0" height="17.0" fill="none" stroke="#808080" stroke-dasharray="4,2.5"/><path d="M1079.05,443.3L1112.85,460.5M1112.85,443.3L1079.05,460.5" fill="none" stroke="#808080" stroke-dasharray="4,2.5"/><line x1="1032.15" y1="474.5" x2="1066.8500000000001" y2="474.5" stroke="#808080" stroke-width="1" /><line x1="1083.05" y1="474.5" x2="1118.45" y2="474.5" stroke="#808080" stroke-width="1" /><line x1="1032.15" y1="478.5" x2="1066.8500000000001" y2="478.5" stroke="#808080" stroke-width="1" /><line x1="1083.05" y1="478.5" x2="1118.45" y2="478.5" stroke="#808080" stroke-width="1" /><line x1="1032.15" y1="481.5" x2="1066.8500000000001" y2="481.5" stroke="#808080" stroke-width="1" /><line x1="1083.05" y1="481.5" x2="1118.45" y2="481.5" stroke="#808080" stroke-width="1" /><line x1="1066.5" y1="470.6" x2="1066.5" y2="482" stroke="#808080" stroke-width="1" /><line x1="1083.5" y1="470.6" x2="1083.5" y2="482" stroke="#808080" stroke-width="1" /><line x1="1032.15" y1="470.5" x2="1118.45" y2="470.5" stroke="#808080" stroke-width="1" /><line x1="670.5" y1="470.6" x2="670.5" y2="722" stroke="#808080" stroke-width="1" /><rect x="707.5" y="470.5" width="29.0" height="17.0" fill="none" stroke="#808080" /><line x1="724.5" y1="481" x2="724.5" y2="487.4" stroke="#808080" stroke-width="1" /><line x1="736.4" y1="471.5" x2="855" y2="471.5" stroke="#808080" stroke-width="1" /><line x1="736.4" y1="473.5" x2="855" y2="473.5" stroke="#808080" stroke-width="1" /><line x1="736.4" y1="475.5" x2="855" y2="475.5" stroke="#808080" stroke-width="1" /><line x1="736.4" y1="478.5" x2="855" y2="478.5" stroke="#808080" stroke-width="1" /><line x1="736.4" y1="481.5" x2="855" y2="481.5" stroke="#808080" stroke-width="1" /><line x1="736.4" y1="487.5" x2="855" y2="487.5" stroke="#808080" stroke-width="1" /><line x1="670.7" y1="487.5" x2="737.8" y2="487.5" stroke="#808080" stroke-width="1" /><line x1="670.7" y1="489.5" x2="737.8" y2="489.5" stroke="#6a6a6a" stroke-width="1" /><line x1="670.7" y1="538.5" x2="737.8" y2="538.5" stroke="#808080" stroke-width="1" /><line x1="670.7" y1="539.5" x2="737.8" y2="539.5" stroke="#6a6a6a" stroke-width="1" /><line x1="670.7" y1="588.5" x2="737.8" y2="588.5" stroke="#808080" stroke-width="1" /><line x1="670.7" y1="590.5" x2="737.8" y2="590.5" stroke="#6a6a6a" stroke-width="1" /><line x1="670.7" y1="639.5" x2="737.8" y2="639.5" stroke="#808080" stroke-width="1" /><line x1="670.7" y1="641.5" x2="737.8" y2="641.5" stroke="#6a6a6a" stroke-width="1" /><path d="M714,504.6H687.4V520.6H714A8,8 0 0 0 714,504.6Z" fill="none" stroke="#808080"/><circle cx="708.2" cy="512.6" r="1.4" fill="none" stroke="#808080" stroke-width="0.8"/><rect x="689.5" y="506.5" width="25.0" height="12.0" fill="none" stroke="#808080" /><line x1="714.5" y1="504.6" x2="714.5" y2="520.6" stroke="#808080" stroke-width="1" /><line x1="737.5" y1="487.6" x2="737.5" y2="495.6" stroke="#808080" stroke-width="1" /><path d="M737.8,495.6L767.9,513.1Q758,529.6 737.8,530.6V538.1" fill="none" stroke="#808080"/><path d="M714,555H687.4V571H714A8,8 0 0 0 714,555Z" fill="none" stroke="#808080"/><circle cx="708.2" cy="563" r="1.4" fill="none" stroke="#808080" stroke-width="0.8"/><rect x="689.5" y="557.5" width="25.0" height="12.0" fill="none" stroke="#808080" /><line x1="714.5" y1="555" x2="714.5" y2="571" stroke="#808080" stroke-width="1" /><line x1="737.5" y1="538" x2="737.5" y2="546" stroke="#808080" stroke-width="1" /><path d="M737.8,546L767.9,563.5Q758,580 737.8,581V588.5" fill="none" stroke="#808080"/><path d="M714,605.5H687.4V621.5H714A8,8 0 0 0 714,605.5Z" fill="none" stroke="#808080"/><circle cx="708.2" cy="613.5" r="1.4" fill="none" stroke="#808080" stroke-width="0.8"/><rect x="689.5" y="607.5" width="25.0" height="12.0" fill="none" stroke="#808080" /><line x1="714.5" y1="605.5" x2="714.5" y2="621.5" stroke="#808080" stroke-width="1" /><line x1="737.5" y1="588.5" x2="737.5" y2="596.5" stroke="#808080" stroke-width="1" /><path d="M737.8,596.5L767.9,614.0Q758,630.5 737.8,631.5V639.0" fill="none" stroke="#808080"/><path d="M714,656.4H687.4V672.4H714A8,8 0 0 0 714,656.4Z" fill="none" stroke="#808080"/><circle cx="708.2" cy="664.4" r="1.4" fill="none" stroke="#808080" stroke-width="0.8"/><rect x="689.5" y="658.5" width="25.0" height="12.0" fill="none" stroke="#808080" /><line x1="714.5" y1="656.4" x2="714.5" y2="672.4" stroke="#808080" stroke-width="1" /><line x1="737.5" y1="639.4" x2="737.5" y2="647.4" stroke="#808080" stroke-width="1" /><path d="M737.8,647.4L767.9,664.9Q758,681.4 737.8,682.4V689.9" fill="none" stroke="#808080"/><line x1="670.7" y1="685.5" x2="737.8" y2="685.5" stroke="#808080" stroke-width="1" /><line x1="670.7" y1="686.5" x2="737.8" y2="686.5" stroke="#6a6a6a" stroke-width="1" /><line x1="739.5" y1="487.6" x2="739.5" y2="722" stroke="#707070" stroke-width="1" /><circle cx="765.5" cy="536.7" r="11.5" fill="none" stroke="#1eaab4" stroke-width="1.1"/><circle cx="765.5" cy="536.7" r="4.6" fill="url(#hat)" stroke="#1eaab4"/><path d="M757.4,528.6L762.2,533.4000000000001M768.8,540.0L773.6,544.8000000000001M773.6,528.6L768.8,533.4000000000001M762.2,540.0L757.4,544.8000000000001" stroke="#1eaab4"/><circle cx="765.5" cy="671.3" r="11.5" fill="none" stroke="#1eaab4" stroke-width="1.1"/><circle cx="765.5" cy="671.3" r="4.6" fill="url(#hat)" stroke="#1eaab4"/><path d="M757.4,663.1999999999999L762.2,668.0M768.8,674.5999999999999L773.6,679.4M773.6,663.1999999999999L768.8,668.0M762.2,674.5999999999999L757.4,679.4" stroke="#1eaab4"/><line x1="765.5" y1="548.2" x2="765.5" y2="659.8" stroke="#980f14" stroke-width="1" /><line x1="765.5" y1="682.8" x2="765.5" y2="722" stroke="#980f14" stroke-width="1" /><text x="754.2" y="602.5" font-size="20" fill="#8e8e8e" textLength="10.0" lengthAdjust="spacingAndGlyphs" style="font-family:'Liberation Sans';font-weight:200">卫</text><text x="766.9" y="602.5" font-size="20" fill="#8e8e8e" textLength="10.0" lengthAdjust="spacingAndGlyphs" style="font-family:'Liberation Sans';font-weight:200">生</text><text x="779.6" y="602.5" font-size="20" fill="#8e8e8e" textLength="10.0" lengthAdjust="spacingAndGlyphs" style="font-family:'Liberation Sans';font-weight:200">间</text><line x1="819.5" y1="487.7" x2="819.5" y2="722" stroke="#808080" stroke-width="1" /><rect x="836.5" y="496.5" width="28.0" height="196.0" fill="none" stroke="#808080" rx="1.5"/><line x1="850.5" y1="506.3" x2="850.5" y2="553.7" stroke="#9a9a9a" stroke-width="1" /><path d="M848.5,533L852.5,533L850.5,548Z" fill="#a8a8a8"/><line x1="850.5" y1="640" x2="850.5" y2="690" stroke="#9a9a9a" stroke-width="1" /><path d="M848.5,660L852.5,660L850.5,645Z" fill="#a8a8a8"/><circle cx="850.5" cy="594" r="3.5" fill="none" stroke="#808080"/><line x1="864.5" y1="487.6" x2="864.5" y2="722" stroke="#808080" stroke-width="1" /><line x1="819.8" y1="701.5" x2="864.5" y2="701.5" stroke="#808080" stroke-width="1" /><line x1="819.8" y1="705.5" x2="864.5" y2="705.5" stroke="#808080" stroke-width="1" /><rect x="836.5" y="711.5" width="23.0" height="12.0" fill="none" stroke="#808080" /><line x1="819.8" y1="487.5" x2="864.5" y2="487.5" stroke="#808080" stroke-width="1" /><path transform="translate(583.00,330.00) scale(0.620,1.600)" d="M0,2.5C0.5,0.8 2.5,0 5,0C8,0 10,1.2 10,3C10,5 8,6.2 0,10H10" fill="none" stroke="#c8c8c8" stroke-width="1.0" vector-effect="non-scaling-stroke"/><path transform="translate(591.60,330.00) scale(0.620,1.600)" d="M5,0C1.2,0 0,2.5 0,5C0,7.5 1.2,10 5,10C8.8,10 10,7.5 10,5C10,2.5 8.8,0 5,0Z" fill="none" stroke="#c8c8c8" stroke-width="1.0" vector-effect="non-scaling-stroke"/><path transform="translate(600.20,330.00) scale(0.620,1.600)" d="M5,0C1.2,0 0,2.5 0,5C0,7.5 1.2,10 5,10C8.8,10 10,7.5 10,5C10,2.5 8.8,0 5,0Z" fill="none" stroke="#c8c8c8" stroke-width="1.0" vector-effect="non-scaling-stroke"/><path transform="translate(610.50,330.00) scale(0.830,1.600)" d="M0,0L10,10M10,0L0,10" fill="none" stroke="#c8c8c8" stroke-width="1.0" vector-effect="non-scaling-stroke"/><path transform="translate(619.50,330.00) scale(0.560,1.600)" d="M1.5,2.2L6,0V10" fill="none" stroke="#c8c8c8" stroke-width="1.0" vector-effect="non-scaling-stroke"/><path transform="translate(625.80,330.00) scale(0.620,1.600)" d="M5,0C1.2,0 0,2.5 0,5C0,7.5 1.2,10 5,10C8.8,10 10,7.5 10,5C10,2.5 8.8,0 5,0Z" fill="none" stroke="#c8c8c8" stroke-width="1.0" vector-effect="non-scaling-stroke"/><path transform="translate(633.60,330.00) scale(0.620,1.600)" d="M5,0C1.2,0 0,2.5 0,5C0,7.5 1.2,10 5,10C8.8,10 10,7.5 10,5C10,2.5 8.8,0 5,0Z" fill="none" stroke="#c8c8c8" stroke-width="1.0" vector-effect="non-scaling-stroke"/><text x="644.8" y="345.5" font-size="20" fill="#b4b4b4" textLength="148.2" lengthAdjust="spacingAndGlyphs" style="font-family:'Liberation Sans';font-weight:200">强电托盘式金属桥架在梁底以下</text><path transform="translate(795.50,336.00) scale(0.300,1.000)" d="M5,7.5V10L3.2,12.5" fill="none" stroke="#c8c8c8" stroke-width="1.0" vector-effect="non-scaling-stroke"/><text x="802" y="345.5" font-size="20" fill="#b4b4b4" textLength="61.9" lengthAdjust="spacingAndGlyphs" style="font-family:'Liberation Sans';font-weight:200">吊顶以上敷设</text><text x="583.9" y="375" font-size="20" fill="#b4b4b4" textLength="76.2" lengthAdjust="spacingAndGlyphs" style="font-family:'Liberation Sans';font-weight:200">梁底标高为当层</text><path transform="translate(660.70,360.00) scale(0.400,1.600)" d="M0.5,6H9.5" fill="none" stroke="#c8c8c8" stroke-width="1.0" vector-effect="non-scaling-stroke"/><path transform="translate(667.80,357.50) scale(0.520,1.850)" d="M5,0C1.2,0 0,2.5 0,5C0,7.5 1.2,10 5,10C8.8,10 10,7.5 10,5C10,2.5 8.8,0 5,0Z" fill="none" stroke="#c8c8c8" stroke-width="1.0" vector-effect="non-scaling-stroke"/><path transform="translate(677.00,357.50) scale(0.300,1.850)" d="M4,9.2H6V10H4Z" fill="none" stroke="#c8c8c8" stroke-width="1.0" vector-effect="non-scaling-stroke"/><path transform="translate(682.00,357.50) scale(0.650,1.850)" d="M0.5,1C2,0.2 3.5,0 5,0C8,0 9.5,1.2 9.5,2.6C9.5,4.1 8,5 4,5C8.2,5 10,5.9 10,7.4C10,9.1 8,10 5,10C3.2,10 1.5,9.6 0,9" fill="none" stroke="#c8c8c8" stroke-width="1.0" vector-effect="non-scaling-stroke"/><text x="690.3" y="375" font-size="20" fill="#b4b4b4" textLength="9.7" lengthAdjust="spacingAndGlyphs" style="font-family:'Liberation Sans';font-weight:200">米</text><path transform="translate(702.00,364.00) scale(0.300,1.000)" d="M5,7.5V10L3.2,12.5" fill="none" stroke="#c8c8c8" stroke-width="1.0" vector-effect="non-scaling-stroke"/><text x="707.4" y="375" font-size="20" fill="#b4b4b4" textLength="31.0" lengthAdjust="spacingAndGlyphs" style="font-family:'Liberation Sans';font-weight:200">吊顶为</text><path transform="translate(739.60,360.00) scale(0.500,1.600)" d="M0.5,6H9.5" fill="none" stroke="#c8c8c8" stroke-width="1.0" vector-effect="non-scaling-stroke"/><path transform="translate(746.50,357.50) scale(0.630,1.850)" d="M5,0C1.2,0 0,2.5 0,5C0,7.5 1.2,10 5,10C8.8,10 10,7.5 10,5C10,2.5 8.8,0 5,0Z" fill="none" stroke="#c8c8c8" stroke-width="1.0" vector-effect="non-scaling-stroke"/><path transform="translate(756.50,357.50) scale(0.300,1.850)" d="M4,9.2H6V10H4Z" fill="none" stroke="#c8c8c8" stroke-width="1.0" vector-effect="non-scaling-stroke"/><path transform="translate(764.20,357.50) scale(0.690,1.850)" d="M0,0H10L3.5,10" fill="none" stroke="#c8c8c8" stroke-width="1.0" vector-effect="non-scaling-stroke"/><path transform="translate(773.60,357.50) scale(0.760,1.850)" d="M0,4V10M0,5.2C0.8,4.3 1.8,4 3,4C4.3,4 5,4.8 5,6V10M5,5.2C5.8,4.3 6.8,4 8,4C9.3,4 10,4.8 10,6V10" fill="none" stroke="#c8c8c8" stroke-width="1.0" vector-effect="non-scaling-stroke"/><rect x="717.8" y="324.8" width="23.2" height="24.6" fill="none" stroke="#c2501c" stroke-width="1.6"/><line x1="719" y1="312" x2="719" y2="331" stroke="#c8924a" stroke-width="1.8"/><path d="M720,312.3L729.6,317.5L720,322.8Z" fill="#ff0a0a"/></g></svg>
<div class="a" style="left:500.5px;top:687.3px;width:267.7px;height:23px;background:#6b6b6b"></div>
<div class="a" style="left:524px;top:690px;width:1px;height:17px;background:#5a5a5a"></div>
<div class="a" style="left:566.7px;top:688.4px;width:112px;height:19.8px;background:#606060;border:1px solid #3e3e3e"></div>
<div class="a" style="left:570.5px;top:693.7px;width:10px;height:9.5px;background:#e8560c;border:1px solid #3a3a3a"></div>
<div class="a ser" style="left:527px;top:693px;font-size:9px;line-height:11px;color:#e6e6e6;white-space:nowrap">标注分类</div>
<div class="a ser" style="left:583px;top:693px;font-size:9px;line-height:11px;color:#f0f0f0;white-space:nowrap">默认</div>
<svg class="a" style="left:0;top:680px" width="1269" height="40"><path d="M671.8,18.2h4l-2,2.5z" fill="#f4f4f4"/><g fill="none" stroke="#f0f0f0" stroke-width="1"><circle cx="510" cy="16.5" r="2.3"/><circle cx="515" cy="16.5" r="2.3"/><circle cx="510" cy="21.5" r="2.3"/><circle cx="515" cy="21.5" r="2.3"/><path d="M687,14.5v9.5h10.5M689,22l1,-3l6,-6l2,2l-6,6z"/><path d="M713.5,13v12M707.5,19h12M711.5,15l2,-2l2,2M711.5,23l2,2l2,-2M709.5,17l-2,2l2,2M717.5,17l2,2l-2,2"/><rect x="729.5" y="15.5" width="7.5" height="9" rx="1.5"/><path d="M732,15.5v-1.5a1.5,1.5 0 0 1 1.5,-1.5h4.5a1.5,1.5 0 0 1 1.5,1.5v7a1.5,1.5 0 0 1 -1.5,1.5h-1"/><rect x="750.5" y="13.5" width="7" height="9" rx="1.5"/><rect x="754.5" y="17.5" width="7" height="7.5" rx="1" fill="#6b6b6b"/></g></svg>
<div class="a" style="left:156.5px;top:140px;width:334.5px;height:304px;background:#f0f0f0;border-radius:7px;box-shadow:0 0 2px rgba(0,0,0,0.5);overflow:hidden"><div class="a" style="left:0;top:0;width:100%;height:21.5px;background:#eef3f8"></div></div>
<svg class="a" style="left:162px;top:144px" width="12" height="12"><defs><linearGradient id="ig162" x1="0" y1="0" x2="1" y2="1"><stop offset="0" stop-color="#0c62c4"/><stop offset="1" stop-color="#1a86ee"/></linearGradient></defs><rect x="0.5" y="0.5" width="11" height="11.2" fill="url(#ig162)" stroke="#3c3a38" stroke-width="0.9"/><path d="M3.8,3.8h-1v4.5h1M5.2,8.3l1.2,-4.8l1.2,4.8M9,3.6v4.7" fill="none" stroke="#e8f0fa" stroke-width="1"/></svg>
<div class="a" style="left:178px;top:145.5px;font-size:9px;line-height:12px;color:#1b1b1b;white-space:nowrap">文字查找</div>
<svg class="a" style="left:0;top:0" width="1269" height="757"><path d="M475.5,147.3l7,7M482.5,147.3l-7,7" stroke="#333" stroke-width="1"/></svg>
<div class="dl" style="left:162.5px;top:170px">查找内容:</div>
<div class="dl" style="left:162.5px;top:187px">查找条件:</div>
<div class="dl" style="left:162.5px;top:203.5px">查找区域:</div>
<div class="dl" style="left:162.5px;top:221px">查找范围:</div>
<div class="a" style="left:209.6px;top:170.2px;width:201.5px;height:11.5px;background:#fff;border-bottom:1px solid #8c8c8c"></div>
<div class="dl" style="left:212px;top:170px;color:#222">桥架</div>
<svg class="a" style="left:0;top:0" width="1269" height="757"><path d="M404.8,174.2l2.6,2.6l2.6,-2.6" fill="none" stroke="#555" stroke-width="0.9"/></svg>
<div class="a" style="left:430px;top:167px;width:55px;height:16.6px;background:#fdfdfd;border:1px solid #5a9fde;border-radius:3px"></div>
<div class="dl" style="left:448.5px;top:170px;color:#222">查找</div>
<div class="a" style="left:209px;top:187.3px;width:10px;height:10px;background:#fff;border:1px solid #707070;border-radius:2px"></div>
<div class="dl" style="left:224px;top:187px">全字匹配</div>
<div class="a" style="left:209px;top:204px;width:10px;height:10px;border-radius:50%;background:#0f5fc0"><div class="a" style="left:3px;top:3px;width:4px;height:4px;border-radius:50%;background:#fff"></div></div>
<div class="dl" style="left:224px;top:203.5px">整张图纸</div>
<div class="a" style="left:264px;top:204px;width:10px;height:10px;border-radius:50%;background:#f8f8f8;border:1px solid #6a6a6a"></div>
<div class="dl gold" style="left:279px;top:203.5px">矩形区域查找</div>
<div class="a" style="left:337px;top:204px;width:10px;height:10px;border-radius:50%;background:#f8f8f8;border:1px solid #6a6a6a"></div>
<div class="dl gold" style="left:352.2px;top:203.5px">异形区域查找</div>
<div class="a" style="left:411px;top:202px;width:57px;height:15px;background:#f6f6f6;border-radius:2px"></div>
<svg class="a" style="left:0;top:0" width="1269" height="757"><g fill="none" stroke="#b8b8b8" stroke-width="0.9"><path d="M419.5,214.5h-4.5v-8h7v3"/><path d="M419,210l3.5,4l1,-1.5l1.5,1.5"/></g></svg>
<div class="dl" style="left:425.5px;top:203.5px;color:#b0b0b0">选择区域</div>
<div class="a" style="left:209px;top:221.5px;width:10px;height:10px;border-radius:50%;background:#0f5fc0"><div class="a" style="left:3px;top:3px;width:4px;height:4px;border-radius:50%;background:#fff"></div></div>
<div class="dl" style="left:224px;top:221px">图纸本身的文字</div>
<div class="a" style="left:291px;top:221.5px;width:10px;height:10px;border-radius:50%;background:#f8f8f8;border:1px solid #6a6a6a"></div>
<div class="dl gold" style="left:306px;top:221px">本软件添加的文字和测量标注</div>
<div class="a" style="left:162px;top:235.4px;width:10px;height:10px;background:#0f5fc0;border-radius:2px"></div><svg class="a" style="left:162px;top:235.4px" width="10" height="10"><path d="M2.5,5.2l2,2l3.2,-3.6" fill="none" stroke="#fff" stroke-width="0.9"/></svg>
<div class="dl" style="left:176px;top:235px">显示结果 （找到8个）</div>
<div class="a" style="left:415.8px;top:235.2px;width:10px;height:10px;background:#0f5fc0;border-radius:2px"></div><svg class="a" style="left:415.8px;top:235.2px" width="10" height="10"><path d="M2.5,5.2l2,2l3.2,-3.6" fill="none" stroke="#fff" stroke-width="0.9"/></svg>
<div class="dl" style="left:430px;top:235px">标记所有结果</div>
<div class="a" style="left:161.7px;top:248.6px;width:324px;height:170px;background:#fff;border:1px solid #a6a6a6"></div>
<div class="a" style="left:191.2px;top:249.5px;width:1px;height:164.5px;background:#e2e2e2"></div>
<div class="a" style="left:459.3px;top:249.5px;width:1px;height:164.5px;background:#e2e2e2"></div>
<div class="dl" style="left:191.2px;top:252px;width:268px;text-align:center;font-weight:bold;color:#1a1a1a">文本内容</div>
<div class="a" style="left:162.7px;top:267.9px;width:296.6px;height:18px;background:#0a74da"></div>
<div class="a" style="left:191.2px;top:267.9px;width:1px;height:18px;background:#3a8ee0"></div>
<div class="a" style="left:162.7px;top:285.9px;width:296.6px;height:1px;background:#e4e4e4"></div>
<div class="cell" style="left:162.7px;top:272.2px;width:28.5px;color:#fff">1</div>
<div class="cell" style="left:191.2px;top:272.2px;width:268px;color:#fff">200X100强电托盘式金属桥架在梁底以下,吊顶以上敷设</div>
<div class="a" style="left:162.7px;top:304.02px;width:296.6px;height:1px;background:#e4e4e4"></div>
<div class="cell" style="left:162.7px;top:290.32px;width:28.5px;color:#1e1e1e">2</div>
<div class="cell" style="left:191.2px;top:290.32px;width:268px;color:#1e1e1e">200X100强电托盘式金属桥架在梁底以下,吊顶以上敷设</div>
<div class="a" style="left:162.7px;top:322.14px;width:296.6px;height:1px;background:#e4e4e4"></div>
<div class="cell" style="left:162.7px;top:308.44px;width:28.5px;color:#1e1e1e">3</div>
<div class="cell" style="left:191.2px;top:308.44px;width:268px;color:#1e1e1e">200X100强电托盘式金属桥架在梁底以下,吊顶以上敷设</div>
<div class="a" style="left:162.7px;top:340.26px;width:296.6px;height:1px;background:#e4e4e4"></div>
<div class="cell" style="left:162.7px;top:326.56px;width:28.5px;color:#1e1e1e">4</div>
<div class="cell" style="left:191.2px;top:326.56px;width:268px;color:#1e1e1e">200X100强电托盘式金属桥架在梁底以下,吊顶以上敷设</div>
<div class="a" style="left:162.7px;top:358.38px;width:296.6px;height:1px;background:#e4e4e4"></div>
<div class="cell" style="left:162.7px;top:344.68px;width:28.5px;color:#1e1e1e">5</div>
<div class="cell" style="left:191.2px;top:344.68px;width:268px;color:#1e1e1e">200X100弱电槽式金属桥架在梁底以下,吊顶以上敷设</div>
<div class="a" style="left:162.7px;top:376.5px;width:296.6px;height:1px;background:#e4e4e4"></div>
<div class="cell" style="left:162.7px;top:362.8px;width:28.5px;color:#1e1e1e">6</div>
<div class="cell" style="left:191.2px;top:362.8px;width:268px;color:#1e1e1e">200X100弱电槽式金属桥架在梁底以下,吊顶以上敷设</div>
<div class="a" style="left:162.7px;top:394.62px;width:296.6px;height:1px;background:#e4e4e4"></div>
<div class="cell" style="left:162.7px;top:380.92px;width:28.5px;color:#1e1e1e">7</div>
<div class="cell" style="left:191.2px;top:380.92px;width:268px;color:#1e1e1e">100X100消防报警防火桥架</div>
<div class="a" style="left:162.7px;top:412.74px;width:296.6px;height:1px;background:#e4e4e4"></div>
<div class="cell" style="left:162.7px;top:399.04px;width:28.5px;color:#1e1e1e">8</div>
<div class="cell" style="left:191.2px;top:399.04px;width:268px;color:#1e1e1e">100X100消防报警防火桥架</div>
<div class="a" style="left:162.7px;top:267.8px;width:296.6px;height:1px;background:#e4e4e4"></div>
<div class="a" style="left:162.6px;top:422.9px;width:72.6px;height:15px;background:#f8f8f8;border:1px solid #dcdcdc;border-radius:2px"></div><div class="dl" style="left:162.6px;top:425.4px;width:72.6px;text-align:center;color:#e2bd80"><span style="font-size:8px">导出到</span><span style="font-family:Liberation Mono;font-size:8px">Excel</span></div>
<div class="a" style="left:372.5px;top:422.4px;width:53.5px;height:15.3px;background:#fdfdfd;border:1px solid #d0d0d0;border-radius:2px"></div><div class="dl" style="left:372.5px;top:424.9px;width:53.5px;text-align:center;color:#3a3a3a">查看下一个</div>
<div class="a" style="left:430.7px;top:422.4px;width:53.5px;height:15.3px;background:#fdfdfd;border:1px solid #d0d0d0;border-radius:2px"></div><div class="dl" style="left:430.7px;top:424.9px;width:53.5px;text-align:center;color:#3a3a3a">完成</div>
<svg class="a" style="left:0;top:0" width="1269" height="757"><line x1="868" y1="50.5" x2="393" y2="165.8" stroke="#ff1c1c" stroke-width="2"/><path d="M386.9,167.4L393.7,162.2L395.9,169Z" fill="#ff1c1c"/><line x1="485.5" y1="177.4" x2="710" y2="315.5" stroke="#ff1c1c" stroke-width="1.8"/><path d="M716.3,319.4L710.6,312.2L707,318.2Z" fill="#ff1c1c"/></svg>
<div class="a" style="left:0;top:722px;width:1269px;height:15px;background:#f0f0f0"></div>
<div class="a" style="left:0;top:737px;width:1269px;height:1px;background:#6a6a6a"></div>
<svg class="a" style="left:0;top:722px" width="1269" height="16"><path d="M0.5,0L5,14.5H49L54,0Z" fill="#000"/><path d="M53.5,0L57,14.5H99L103.5,0" fill="#fff" stroke="#555" stroke-width="0.8"/></svg>
<div class="a" style="left:18px;top:724px;font-size:9px;line-height:11px;color:#fff;white-space:nowrap">模型</div>
<div class="a" style="left:60.5px;top:724px;font-size:9px;line-height:11px;color:#111;white-space:nowrap">建筑图纸</div>
<div class="a" style="left:0;top:738px;width:1269px;height:19px;background:linear-gradient(#f3f1ef,#ebe7e3)"></div>
<div class="a" style="left:214px;top:739px;width:1px;height:18px;background:#dad6d2"></div>
<div class="a" style="left:324px;top:739px;width:1px;height:18px;background:#dad6d2"></div>
<div class="a" style="left:1180px;top:739px;width:1px;height:18px;background:#dad6d2"></div>
<div class="a" style="left:1202px;top:739px;width:1px;height:18px;background:#dad6d2"></div>
<div class="a" style="left:1225px;top:739px;width:1px;height:18px;background:#dad6d2"></div>
<div class="a" style="left:1247px;top:739px;width:1px;height:18px;background:#dad6d2"></div>
<div class="a" style="left:5.5px;top:741.5px;font-family:'Liberation Mono',monospace;font-size:9px;line-height:11px;color:#404040;white-space:nowrap;transform:scaleX(0.824);transform-origin:0 0">x = -13206 y = 551598</div>
<div class="a ser" style="left:327px;top:741.5px;font-size:9px;line-height:11px;color:#444;white-space:nowrap">模型中的标注比例:1</div>
<svg class="a" style="left:0;top:738px" width="1269" height="19"><g fill="none" stroke="#d3a040" stroke-width="1"><path d="M1188,5.5h6l3,3v7.5h-9z"/><path d="M1190,10.5h5M1190,12.5h5"/><path d="M1210,8.5v7h9v-4"/><path d="M1212,13l4,-4l2,2M1214,7h4v3"/></g><rect x="1231.5" y="4" width="12" height="12" rx="2" fill="#1690e0"/><path d="M1234,10h4M1239.5,10a1.5,1.5 0 1 0 3,0a1.5,1.5 0 1 0 -3,0M1234.5,7.5v5" stroke="#fff" stroke-width="1" fill="none"/><rect x="1254" y="4.5" width="11" height="11" rx="1.5" fill="none" stroke="#5aa8e0"/><path d="M1256,12.5h7" stroke="#2a88d0" stroke-width="1.3"/></svg>
</body></html>
